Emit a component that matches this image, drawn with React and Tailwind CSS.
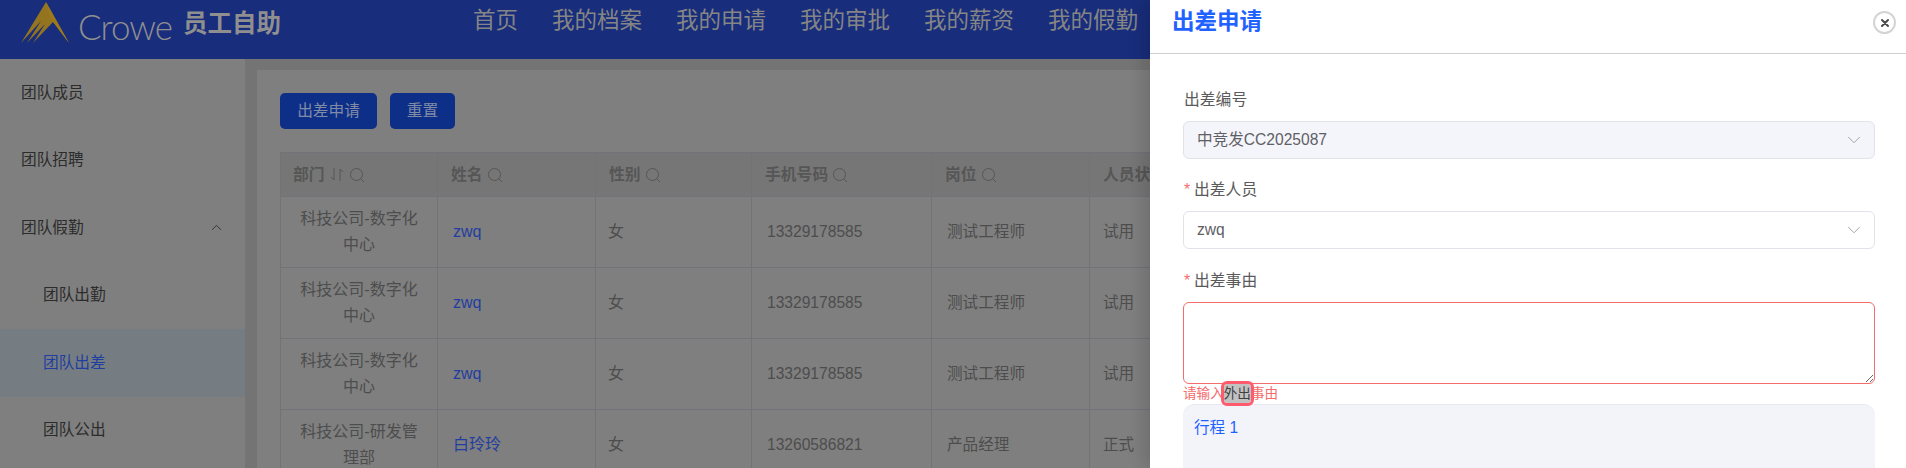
import { ChevronDown, ChevronUp } from 'lucide-react'

const NAV = ['首页', '我的档案', '我的申请', '我的审批', '我的薪资', '我的假勤']

const MENU = [
  { label: '团队成员' },
  { label: '团队招聘' },
  { label: '团队假勤', open: true },
  { label: '团队出勤', sub: true },
  { label: '团队出差', sub: true, active: true },
  { label: '团队公出', sub: true },
]

const COLUMNS = [
  { label: '部门', width: 157, sort: true },
  { label: '姓名', width: 158 },
  { label: '性别', width: 156 },
  { label: '手机号码', width: 180 },
  { label: '岗位', width: 158 },
  { label: '人员状态', width: 158 },
]

const ROWS = [
  { dept: ['科技公司-数字化', '中心'], name: 'zwq', sex: '女', phone: '13329178585', job: '测试工程师', status: '试用' },
  { dept: ['科技公司-数字化', '中心'], name: 'zwq', sex: '女', phone: '13329178585', job: '测试工程师', status: '试用' },
  { dept: ['科技公司-数字化', '中心'], name: 'zwq', sex: '女', phone: '13329178585', job: '测试工程师', status: '试用' },
  { dept: ['科技公司-研发管', '理部'], name: '白玲玲', sex: '女', phone: '13260586821', job: '产品经理', status: '正式' },
]

const Logo = () => (
  <svg width="50" height="42" viewBox="0 0 50 42" className="shrink-0">
    <path d="M25 0 L48 41 L32 20 L12 41 L24 22 L6 41 L20 19 L0 41 Z" fill="#94741f" />
    <path d="M25 0 L48 41 L30 17 Z" fill="#9c7a1c" />
  </svg>
)

const SearchIcon = () => (
  <svg width="16" height="16" viewBox="0 0 16 16" fill="none" stroke="#565656" strokeWidth="1" className="shrink-0">
    <circle cx="7.5" cy="7.5" r="6" />
    <path d="M12 12 L15 15" />
  </svg>
)

const SortIcon = () => (
  <svg width="16" height="15" viewBox="0 0 16 15" fill="none" stroke="#565656" strokeWidth="1" className="shrink-0">
    <path d="M5 1 V13 L2 10" />
    <path d="M11 14 V2 L14 5" />
  </svg>
)

const Label = ({ children, required }) => (
  <div className="h-[22px] pl-[1px] flex items-center text-[15.8px] text-[#5b5b5b]">
    {required && <span className="w-[10px] text-[#f56c6c] text-[16px]">*</span>}
    {children}
  </div>
)

const Select = ({ value, disabled }) => (
  <div
    className={`mt-[10px] h-[38px] flex items-center justify-between pl-[13px] pr-[9px] rounded-md border border-[#e1e3ea] text-[15.6px] text-[#5f6066] ${
      disabled ? 'bg-[#f4f5fa]' : 'bg-white'
    }`}
  >
    {value}
    <ChevronDown size={22} strokeWidth={1} className="text-[#9a9da5]" />
  </div>
)

export default function App() {
  return (
    <div className="relative h-[468px] w-[1906px] overflow-hidden bg-[#7f7f7f] font-['Liberation_Sans','Noto_Sans_CJK_SC',sans-serif]">
      {/* 顶部导航 */}
      <header className="h-[59px] flex items-start bg-[#182d7c]">
        <div className="ml-[21px] mt-[2px]"><Logo /></div>
        <span className="ml-[7px] mt-[4px] w-[93px] text-[35px] leading-[44px] tracking-[-1px] font-light text-[#8f8f8f] font-['Lato',sans-serif]">Crowe</span>
        <span className="ml-[12px] mt-[8px] text-[24.5px] leading-[32px] font-bold text-[#8f8f8f]">员工自助</span>
        <nav className="ml-[192px] mt-[5px] flex gap-[34px] text-[22.5px] leading-[32px] text-[#858585]">
          {NAV.map(n => <span key={n} className="whitespace-nowrap">{n}</span>)}
        </nav>
      </header>

      <div className="flex h-[409px]">
        {/* 侧边菜单 */}
        <aside className="w-[245px] shrink-0 overflow-hidden bg-[#7f7f7f] text-[15.7px] text-[#2c2c2c]">
          {MENU.map(m => (
            <div
              key={m.label}
              className={`h-[67.5px] flex items-center justify-between pr-[20px] ${m.sub ? 'pl-[43px]' : 'pl-[21px]'} ${
                m.active ? 'bg-[#767d82] text-[#1f3e9f]' : ''
              }`}
            >
              {m.label}
              {m.open && <ChevronUp size={17} strokeWidth={1.1} className="text-[#222222]" />}
            </div>
          ))}
        </aside>

        {/* 内容区 */}
        <main className="flex-1 min-w-0 bg-[#747474] pl-[12px] pt-[11px]">
          <div className="h-full bg-[#7f7f7f] pl-[23px] pt-[23px]">
            <div className="flex gap-[13px]">
              <button className="h-[36px] w-[97px] rounded-[5px] bg-[#0d2f88] text-[15.7px] text-[#808ba6]">出差申请</button>
              <button className="h-[36px] w-[65px] rounded-[5px] bg-[#0d2f88] text-[15.7px] text-[#808ba6]">重置</button>
            </div>

            <table className="mt-[23px] table-fixed border-collapse w-[967px] text-[15.6px] text-[#4d4d4d]">
              <colgroup>
                {COLUMNS.map(c => <col key={c.label} style={{ width: c.width }} />)}
              </colgroup>
              <thead>
                <tr className="h-[44px] bg-[#767676]">
                  {COLUMNS.map((c, i) => (
                    <th key={c.label} className={`border border-[#727379] ${i === 0 ? 'pl-[12px]' : 'pl-[13px]'} text-left text-[15.8px] font-bold text-[#565656] whitespace-nowrap overflow-hidden`}>
                      <span className="flex items-center gap-[4px]">
                        {c.label}
                        {c.sort && <SortIcon />}
                        <SearchIcon />
                      </span>
                    </th>
                  ))}
                </tr>
              </thead>
              <tbody>
                {ROWS.map((r, i) => (
                  <tr key={i} className="h-[71px]">
                    <td className="border border-[#727379] px-[12px] text-center text-[16px] leading-[25.6px]">
                      {r.dept.map(d => <div key={d} className="whitespace-nowrap">{d}</div>)}
                    </td>
                    <td className="border border-[#727379] pl-[15px] text-[16px] text-[#1f3e9f]">{r.name}</td>
                    <td className="border border-[#727379] pl-[12px] text-[16px]">{r.sex}</td>
                    <td className="border border-[#727379] pl-[15px]">{r.phone}</td>
                    <td className="border border-[#727379] pl-[15px]">{r.job}</td>
                    <td className="border border-[#727379] pl-[13px]">{r.status}</td>
                  </tr>
                ))}
              </tbody>
            </table>
          </div>
        </main>
      </div>

      {/* 出差申请抽屉 */}
      <section className="absolute inset-y-0 right-0 w-[756px] overflow-hidden bg-white shadow-[-8px_0_14px_rgba(0,0,0,0.12)]">
        <div className="h-[54px] flex items-start justify-between border-b border-[#cfcfcf] pl-[22px] pr-[10px]">
          <h2 className="mt-[6px] text-[22.5px] leading-[32px] font-bold text-[#1f62ff]">出差申请</h2>
          <button className="mt-[11px] size-[23px] flex items-center justify-center rounded-full border-2 border-[#d4d4d4] bg-white">
            <svg width="10" height="10" viewBox="0 0 10 10" stroke="#4a4a4a" strokeWidth="2" strokeLinecap="round">
              <path d="M2 2 L8 8 M8 2 L2 8" />
            </svg>
          </button>
        </div>

        <div className="pl-[33px] pr-[31px] pt-[35px]">
          <Label>出差编号</Label>
          <Select value="中竞发CC2025087" disabled />

          <div className="mt-[20px]">
            <Label required>出差人员</Label>
            <Select value="zwq" />
          </div>

          <div className="mt-[21px]">
            <Label required>出差事由</Label>
            <textarea className="mt-[10px] block h-[82px] w-full rounded-md border-[1.5px] border-[#f56c6c] bg-white outline-none" />
          </div>

          <div className="relative h-[20px] text-[13.6px] leading-[18px] text-[#f56c6c] whitespace-nowrap">
            请输入
            <span className="relative inline-block bg-[#c2c2c2] text-[#3f3f3f] outline-[3px] outline-[#ff5a6e] rounded-[3px] leading-[19px]">外出</span>
            事由
          </div>

          <div className="h-[80px] rounded-t-xl border-t border-[#e6e7ec] bg-[#f3f4fa] pl-[11px] pt-[11px] text-[15.6px] leading-[24px] text-[#1f62ff]">
            行程 1
          </div>
        </div>
      </section>
    </div>
  )
}
